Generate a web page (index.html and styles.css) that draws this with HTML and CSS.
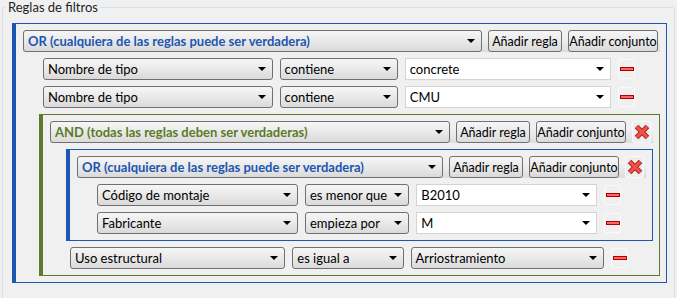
FILE: index.html
```html
<!DOCTYPE html>
<html lang="es">
<head>
  <meta charset="UTF-8" />
  <title>Reglas de filtros</title>
  <link rel="stylesheet" href="styles.css">
</head>
<body>
  <fieldset class="filters">
    <legend>Reglas de filtros</legend>

    <div class="set set-or">
      <div class="set-head">
        <div class="combo head-combo">OR (cualquiera de las reglas puede ser verdadera)</div>
        <button class="btn btn-rule">Añadir regla</button>
        <button class="btn btn-set">Añadir conjunto</button>
      </div>

      <div class="rule">
        <div class="combo field">Nombre de tipo</div>
        <div class="combo op">contiene</div>
        <div class="combo value edit">concrete</div>
        <button class="remove"><span class="minus"></span></button>
      </div>
      <div class="rule">
        <div class="combo field">Nombre de tipo</div>
        <div class="combo op">contiene</div>
        <div class="combo value edit">CMU</div>
        <button class="remove"><span class="minus"></span></button>
      </div>

      <div class="set set-and">
        <div class="set-head">
          <div class="combo head-combo">AND (todas las reglas deben ser verdaderas)</div>
          <button class="btn btn-rule">Añadir regla</button>
          <button class="btn btn-set">Añadir conjunto</button>
          <button class="delete">
            <svg viewBox="0 0 16 16" width="16" height="16">
              <path d="M2.5 2.5 13.5 13.5 M13.5 2.5 2.5 13.5" stroke="#a8231d" stroke-width="5" fill="none"/>
              <path d="M2.9 2.9 13.1 13.1 M13.1 2.9 2.9 13.1" stroke="#f2514a" stroke-width="3" fill="none"/>
            </svg>
          </button>
        </div>

        <div class="set set-or">
          <div class="set-head">
            <div class="combo head-combo">OR (cualquiera de las reglas puede ser verdadera)</div>
            <button class="btn btn-rule">Añadir regla</button>
            <button class="btn btn-set">Añadir conjunto</button>
            <button class="delete">
              <svg viewBox="0 0 16 16" width="16" height="16">
                <path d="M2.5 2.5 13.5 13.5 M13.5 2.5 2.5 13.5" stroke="#a8231d" stroke-width="5" fill="none"/>
                <path d="M2.9 2.9 13.1 13.1 M13.1 2.9 2.9 13.1" stroke="#f2514a" stroke-width="3" fill="none"/>
              </svg>
            </button>
          </div>

          <div class="rule">
            <div class="combo field">Código de montaje</div>
            <div class="combo op">es menor que</div>
            <div class="combo value edit">B2010</div>
            <button class="remove"><span class="minus"></span></button>
          </div>
          <div class="rule">
            <div class="combo field">Fabricante</div>
            <div class="combo op">empieza por</div>
            <div class="combo value edit">M</div>
            <button class="remove"><span class="minus"></span></button>
          </div>
        </div>

        <div class="rule">
          <div class="combo field">Uso estructural</div>
          <div class="combo op">es igual a</div>
          <div class="combo value">Arriostramiento</div>
          <button class="remove"><span class="minus"></span></button>
        </div>
      </div>
    </div>
  </fieldset>
</body>
</html>
```

FILE: styles.css
```css
/* Filter rules dialog */
html, body {
  margin: 0;
  height: 100%;
  overflow: hidden;
}
body {
  background: #f0f0f0;
  font-family: Lato, "Segoe UI", sans-serif;
  font-size: 13px;
  color: #000;
}

.filters {
  margin: 0 2px;
  padding: 8px 7px 40px 9px;
  border: 1px solid #d5dfe5;
  border-radius: 3px;
}
.filters legend {
  margin-left: -6px;
  padding: 0 2px;
  line-height: 15px;
  color: #1e1e1e;
}

/* rule sets */
.set {
  display: flex;
  flex-direction: column;
  gap: 6px;
  padding: 6px 6px 6px 7px;
  border: 1px solid;
  border-left-width: 4px;
}
.set-or { border-color: #1d57b3; }
.set-and { border-color: #5d7b2b; }
.set .set { margin-left: 16px; }

.set-head {
  display: flex;
  gap: 6px;
  height: 22px;
  padding-right: 2px;
  background: linear-gradient(#f0f0f0 35%, #dcdcdc);
}
.head-combo {
  flex: 1;
  font-weight: bold;
  padding-left: 3px;
}
.set-or > .set-head .head-combo { color: #1e56b0; }
.set-and > .set-head .head-combo { color: #5b7b27; }

/* combos and buttons */
.combo {
  display: flex;
  align-items: center;
  box-sizing: border-box;
  height: 22px;
  min-width: 0;
  padding: 0 6px 0 4px;
  border: 1px solid #707070;
  border-radius: 3px;
  background: linear-gradient(#f6f6f6, #e9e9e9 50%, #dadada);
  white-space: nowrap;
}
.combo::after {
  content: "";
  margin-left: auto;
  border-left: 4px solid transparent;
  border-right: 4px solid transparent;
  border-top: 4px solid #000;
}
.combo.edit {
  background: #fff;
  border-color: #d3d3d3;
  border-radius: 0;
}

.btn {
  box-sizing: border-box;
  height: 22px;
  padding: 0;
  border: 1px solid #707070;
  border-radius: 3px;
  background: linear-gradient(#f6f6f6, #e9e9e9 50%, #dadada);
  font: inherit;
  font-size: 12.5px;
  white-space: nowrap;
  color: #000;
}
.btn-rule { width: 74px; }
.btn-set { width: 90px; }

.delete {
  display: flex;
  align-items: center;
  justify-content: center;
  box-sizing: border-box;
  width: 19px;
  height: 22px;
  padding: 0;
  border: 1px solid #fafafa;
  border-radius: 2px;
  background: #eeeeee;
}

/* rule rows */
.rule {
  display: flex;
  align-items: center;
  gap: 7px;
  height: 22px;
  margin: 0 25px 0 20px;
}
.field { flex: 42 1 0; }
.op { flex: 20.5 1 0; }
.value { flex: 37.5 1 0; }

.remove {
  display: flex;
  align-items: center;
  justify-content: center;
  box-sizing: border-box;
  width: 17px;
  height: 20px;
  padding: 0;
  border: 1px solid #fafafa;
  border-radius: 2px;
  background: #f0f0f0;
}
.minus {
  box-sizing: border-box;
  width: 14px;
  height: 4px;
  border: 1px solid #b30000;
  background: #ff6262;
}
```
